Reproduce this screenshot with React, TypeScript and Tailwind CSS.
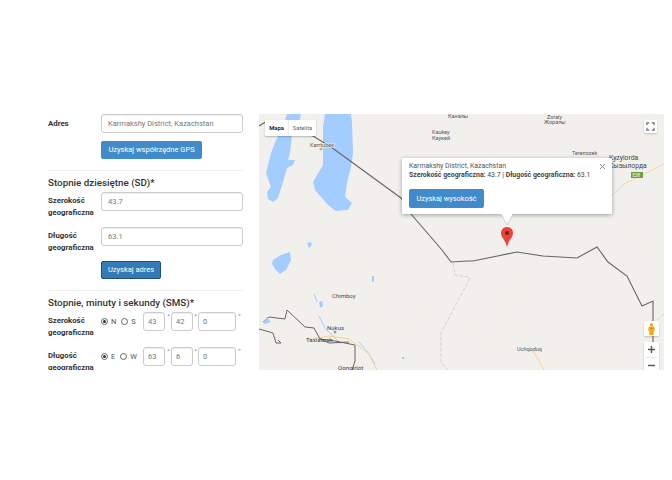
const inputClass =
  "flex items-center rounded-[3px] border border-[#ccc] bg-white text-[7.5px] text-[#777] shadow-[inset_0_1px_1px_rgba(0,0,0,0.075)]";
const labelClass = "text-[7.8px] leading-[11.5px] font-bold text-[#333]";

function Radio({ checked, label }: { checked?: boolean; label: string }) {
  return (
    <span className="flex items-center gap-[3px] text-[7.5px] text-[#555]">
      <span className="flex h-[7px] w-[7px] items-center justify-center rounded-full border border-[#666] bg-white">
        {checked && <span className="h-[3px] w-[3px] rounded-full bg-[#333]" />}
      </span>
      {label}
    </span>
  );
}

function DmsRow({ label, dir, d, m, s }: { label: string; dir: [string, string]; d: string; m: string; s: string }) {
  return (
    <div className="flex h-[35px] items-start">
      <div className={`${labelClass} w-[53px] pt-[3px]`}>
        {label}
        <br />
        geograficzna
      </div>
      <div className="flex h-[19px] w-[42px] items-center gap-[5px]">
        <Radio checked label={dir[0]} />
        <Radio label={dir[1]} />
      </div>
      <div className={`${inputClass} h-[19px] w-[22px] pl-[4px]`}>{d}</div>
      <span className="w-[6px] pl-[2px] text-[8px] leading-[10px] text-[#428bca]">°</span>
      <div className={`${inputClass} h-[19px] w-[22px] pl-[4px]`}>{m}</div>
      <span className="w-[5px] pl-[1px] text-[8px] leading-[10px] text-[#428bca]">°</span>
      <div className={`${inputClass} h-[19px] w-[38px] pl-[4px]`}>{s}</div>
      <span className="pl-[2px] text-[8px] leading-[10px] text-[#428bca]">"</span>
    </div>
  );
}

function MapDrawing() {
  const road = "#f7eeda";
  return (
    <svg viewBox="0 0 405 256" className="absolute inset-0 h-full w-full" fill="none">
      {/* lakes */}
      <path
        d="M28 0L42 0L40 9L33 18L32 30L31 39L29 46L36 46L34 51L28 54L24 68L19 84L14 88L9 85L8 78L12 73L7 59L12 39L17 26L23 16Z"
        fill="#a3ccff"
      />
      <path
        d="M66 0L92 0L93 9L94 39L92 53L88 69L86 83L93 89L89 96L77 97L69 91L56 76L54 68L64 51L64 29L64 13Z"
        fill="#a3ccff"
      />
      <path d="M14 146L22 141L31 138L32 146L27 156L21 160L16 155L13 150Z" fill="#a3ccff" />
      <path d="M48 129l4-1l1 3l-3 3zM113 162h2v6h-2zM60 188l3-1l1 5l-3 2zM143 243h2v2h-2z" fill="#a3ccff" />
      <path d="M55 180l3 8M60 202l6 12l10 10l6 6M100 228l10 12l6 10" stroke="#a3ccff" strokeWidth="1" />
      {/* roads */}
      <path
        d="M0 175L10 175L40 178L46 170L56 180L62 155L65 146L72 130L55 160L80 150L105 150L124 165L124 207L100 247L99 256M82 200L95 198L124 207L140 212L162 200L185 210M0 230L20 220L46 227L90 232L110 250L115 256M50 230L30 256M40 240L80 250"
        stroke={road}
        strokeWidth="0.8"
      />
      <path d="M47 226L70 222L90 225L110 240L118 256" stroke="#f2d48a" strokeWidth="1" />
      <path
        d="M238 170L247 198L259 217L263 232M265 256L300 250L331 246L370 241L400 222M305 127L290 127L264 153L258 180L258 187L240 200L242 215M201 215L230 225L255 237"
        stroke={road}
        strokeWidth="0.8"
      />
      <path d="M271 233L276 240L285 256" stroke="#f2d48a" strokeWidth="1" />
      <path
        d="M200 0L207 18L215 32L235 45M345 65L358 50L375 40L405 18M320 68L340 62M330 62L340 88L345 95L370 115L395 135"
        stroke={road}
        strokeWidth="0.8"
      />
      <path d="M338 78L345 90L365 70L385 60L405 50" stroke="#f2d48a" strokeWidth="0.8" />
      {/* borders */}
      <path
        d="M0 12L8 7L54 22L72 33L142 84L152 100L183 136L192 148L209 147L214 147L258 138L284 142L318 144L338 133L349 148L368 162L383 192L394 187L394 228"
        stroke="#666"
        strokeWidth="1.1"
      />
      <path
        d="M194 149L196 161L209 163L211 164L201 183L182 219L182 248L189 256M405 200L398 206"
        stroke="#c4c4c4"
        strokeWidth="0.7"
        strokeDasharray="4 1.500"
      />
      <path
        d="M4 208L10 203L26 205L28 196L46 213L55 214L61 225L76 227L96 231L96 247L93 256M0 215L14 219L17 229L22 229L19 226M61 225L70 229L90 228"
        stroke="#666"
        strokeWidth="1"
      />
      <path d="M4 208L8 204L12 208L6 210Z" fill="#a3ccff" />
      {/* labels */}
      <g fontFamily="Roboto, sans-serif" fill="#555" fontSize="5.5">
        <text x="189" y="4">Каналы</text>
        <text x="173" y="19.500">Kaukey</text>
        <text x="173" y="25.500">Каукей</text>
        <text x="288" y="5">Zoraly</text>
        <text x="285" y="10">Жоралы</text>
        <text x="313" y="41">Terenozek</text>
        <text x="350" y="46" fontSize="6.8" fill="#444">Kyzylorda</text>
        <text x="350" y="54" fontSize="6.8" fill="#444">Кызылорда</text>
        <text x="51" y="33" stroke="#f2f0ed" strokeWidth="1.200" paintOrder="stroke">Karrtubek</text>
        <text x="73" y="184" fontSize="6" fill="#444">Chimboy</text>
        <text x="68" y="216" fontSize="6" fill="#444">Nukus</text>
        <text x="47" y="228" fontSize="6.2" fill="#444">Taxiatosh</text>
        <text x="79" y="256" fontSize="6.200" fill="#444">Qonqirlot</text>
        <text x="258" y="236.500">Uchquduq</text>
      </g>
      <circle cx="62" cy="35" r="1" stroke="#777" strokeWidth="0.6" />
      <circle cx="76" cy="218" r="1" stroke="#555" strokeWidth="0.7" />
      <rect x="372" y="58" width="12" height="6" fill="#6f9e3c" />
      <text x="373.500" y="63" fontFamily="Roboto, sans-serif" fontSize="4.5" fill="#fff">E38</text>
      {/* marker */}
      <path
        d="M248 113c-3.400 0-6 2.600-6 6c0 4.400 4.200 6.500 6 14c1.800-7.500 6-9.600 6-14c0-3.400-2.600-6-6-6Z"
        fill="#ea4335"
      />
      <circle cx="248" cy="119" r="2" fill="#7a1c14" />
    </svg>
  );
}

export default function App() {
  return (
    <div className="flex h-[480px] w-[672px] items-start bg-white pt-[114px] pl-[48px] font-['Roboto',sans-serif]">
      {/* form column, cut off by the fixed height */}
      <div className="h-[256px] w-[195px] shrink-0 overflow-hidden">
        <div className="flex h-[19px] items-center">
          <div className={`${labelClass} w-[53px]`}>Adres</div>
          <div className={`${inputClass} h-[19px] w-[142px] pl-[6px]`}>Karmakshy District, Kazachstan</div>
        </div>
        <button className="mt-[8px] ml-[53px] flex h-[18px] w-[101px] items-center justify-center rounded-[2px] bg-[#428bca] text-[7.5px] text-white">
          Uzyskaj współrzędne GPS
        </button>
        <div className="mt-[11px] border-t border-[#eee]" />
        <h2 className="mt-[4px] h-[15px] text-[9.8px] leading-[15px] font-medium text-[#333]">
          Stopnie dziesiętne (SD)*
        </h2>
        <div className="mt-[2px] flex h-[35px] items-start">
          <div className={`${labelClass} w-[53px] pt-[3px]`}>
            Szerokość
            <br />
            geograficzna
          </div>
          <div className={`${inputClass} h-[19px] w-[142px] pl-[6px]`}>43.7</div>
        </div>
        <div className="flex h-[34px] items-start">
          <div className={`${labelClass} w-[53px] pt-[3px]`}>
            Długość
            <br />
            geograficzna
          </div>
          <div className={`${inputClass} h-[19px] w-[142px] pl-[6px]`}>63.1</div>
        </div>
        <button className="ml-[53px] flex h-[18px] w-[60px] items-center justify-center rounded-[2px] border border-[#204d74] bg-[#337ab7] text-[7.5px] text-white">
          Uzyskaj adres
        </button>
        <div className="mt-[11px] border-t border-[#eee]" />
        <h2 className="mt-[4px] h-[15px] text-[9.8px] leading-[15px] font-medium text-[#333]">
          Stopnie, minuty i sekundy (SMS)*
        </h2>
        <div className="mt-[2px]">
          <DmsRow label="Szerokość" dir={["N", "S"]} d="43" m="42" s="0" />
          <DmsRow label="Długość" dir={["E", "W"]} d="63" m="6" s="0" />
        </div>
      </div>

      {/* map */}
      <div className="relative ml-[16px] h-[256px] w-[405px] shrink-0 overflow-hidden bg-[#f2f0ed]">
        <MapDrawing />

        <div className="absolute top-[6px] left-[6px] flex h-[16px] rounded-[1px] bg-white text-[5.8px] shadow-[0_1px_2px_rgba(0,0,0,0.25)]">
          <span className="flex w-[23px] items-center justify-center font-medium text-black">Mapa</span>
          <span className="flex w-[28px] items-center justify-center border-l border-[#eee] text-[#666]">Satelita</span>
        </div>

        <div className="absolute top-[6px] left-[385px] flex h-[13px] w-[13px] items-center justify-center rounded-[1px] bg-white shadow-[0_1px_2px_rgba(0,0,0,0.2)]">
          <svg viewBox="0 0 10 10" className="h-[9px] w-[9px]" fill="none" stroke="#666" strokeWidth="1.200">
            <path d="M1 3.500V1H3.500M6.500 1H9V3.500M9 6.500V9H6.500M3.500 9H1V6.500" />
          </svg>
        </div>

        {/* info window */}
        <div className="absolute top-[44px] left-[143px] h-[56px] w-[210px] rounded-[1px] bg-white px-[7px] pt-[4px] text-[6.9px] leading-[9px] text-[#444] shadow-[0_1px_4px_rgba(0,0,0,0.35)]">
          <div className="text-[#555]">Karmakshy District, Kazachstan</div>
          <div className="whitespace-nowrap">
            <b className="font-bold">Szerokość geograficzna:</b> 43.7 | <b className="font-bold">Długość geograficzna:</b> 63.1
          </div>
          <button className="mt-[9px] flex h-[19px] w-[75px] items-center justify-center rounded-[2px] bg-[#428bca] text-[7.4px] text-white">
            Uzyskaj wysokość
          </button>
          <svg viewBox="0 0 8 8" className="absolute top-[5px] right-[6px] h-[7px] w-[7px]" stroke="#888" strokeWidth="1.100">
            <path d="M1 1L7 7M7 1L1 7" />
          </svg>
        </div>
        <svg viewBox="0 0 12 11" className="absolute top-[100px] left-[242px] h-[11px] w-[12px]">
          <path d="M0 0H12L6 11Z" fill="#fff" />
          <path d="M0 0L6 11L12 0" fill="none" stroke="#bbb" strokeWidth="0.600" />
        </svg>

        {/* street view + zoom */}
        <div className="absolute top-[207px] left-[385px] flex h-[15px] w-[15px] items-center justify-center rounded-[1px] bg-white shadow-[0_1px_2px_rgba(0,0,0,0.2)]">
          <svg viewBox="0 0 8 14" className="h-[12px] w-[7px]">
            <circle cx="4" cy="2" r="1.900" fill="#f2a91e" />
            <path d="M1 4H7L8 9H6.500V14H1.500V9H0Z" fill="#f2a91e" />
            <circle cx="4" cy="6" r="0.800" fill="#c2501a" />
          </svg>
        </div>
        <div className="absolute top-[228px] left-[385px] flex w-[15px] flex-col items-center rounded-[1px] bg-white shadow-[0_1px_2px_rgba(0,0,0,0.2)]">
          <svg viewBox="0 0 15 15" className="h-[15px] w-[15px]" stroke="#555" strokeWidth="1.400">
            <path d="M4 7.500H11M7.500 4V11" />
          </svg>
          <div className="h-px w-[11px] bg-[#e6e6e6]" />
          <svg viewBox="0 0 15 15" className="h-[15px] w-[15px]" stroke="#555" strokeWidth="1.400">
            <path d="M4 7.500H11" />
          </svg>
        </div>
      </div>
    </div>
  );
}
